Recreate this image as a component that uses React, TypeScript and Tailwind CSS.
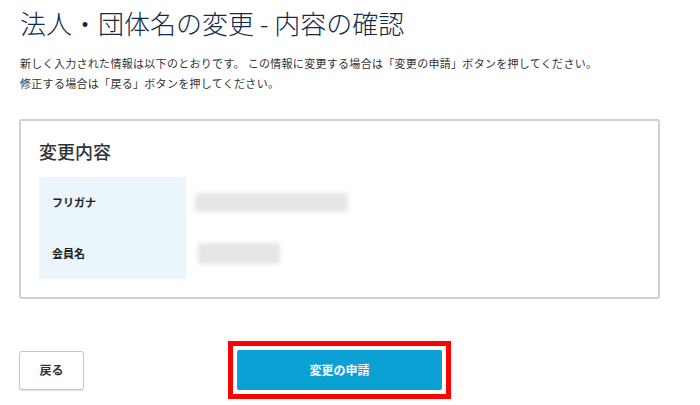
import React from 'react';

const rows = [
  { label: 'フリガナ', barW: 'w-[153px]', barH: 'h-[19px]', barX: 'ml-[9px]' },
  { label: '会員名', barW: 'w-[82px]', barH: 'h-[21px]', barX: 'ml-[12px]' },
];

const App: React.FC = () => {
  return (
    <div className="w-[700px] h-[405px] bg-white px-[19px] overflow-hidden font-['Noto_Sans_CJK_JP','Noto_Sans',sans-serif] text-[#333]">
      <h1 className="pt-[6px] pl-[1px] text-[26px] leading-[34px] font-light text-[#13294b]">
        法人・団体名の変更 - 内容の確認
      </h1>
      <p className="mt-[13px] pl-[1px] text-[11px] leading-[20px] tracking-[0.3px] text-[#333]">
        新しく入力された情報は以下のとおりです。 この情報に変更する場合は「変更の申請」ボタンを押してください。
        <br />
        修正する場合は「戻る」ボタンを押してください。
      </p>

      <div className="mt-[26px] w-[641px] border-2 border-[#d0d0d0] rounded-[3px] px-[18px] pt-[18px] pb-[18px]">
        <h2 className="text-[18px] leading-[24px] font-medium text-[#333]">変更内容</h2>
        <div className="mt-[14px]">
          {rows.map((r) => (
            <div key={r.label} className="flex h-[51px]">
              <div className="w-[147px] bg-[#eaf6fc] flex items-center pl-[13px] text-[11px] font-bold text-[#222]">
                {r.label}
              </div>
              <div className="flex items-center">
                <div className={`${r.barW} ${r.barH} ${r.barX} bg-[#e6e6e6] blur-[2px] rounded-[2px]`} />
              </div>
            </div>
          ))}
        </div>
      </div>

      <div className="mt-[42px] flex items-center">
        <button className="w-[65px] h-[39px] border border-[#c4c4c4] rounded-[3px] bg-white shadow-[0_1px_1px_rgba(0,0,0,0.12)] text-[12px] font-bold text-[#333]">
          戻る
        </button>
        <div className="ml-[144px] border-[5px] border-[#ff0000] p-[4px]">
          <button className="w-[205px] h-[40px] bg-[#0ca1d5] rounded-[2px] text-white text-[12px] font-bold">
            変更の申請
          </button>
        </div>
      </div>
    </div>
  );
};

export default App;
